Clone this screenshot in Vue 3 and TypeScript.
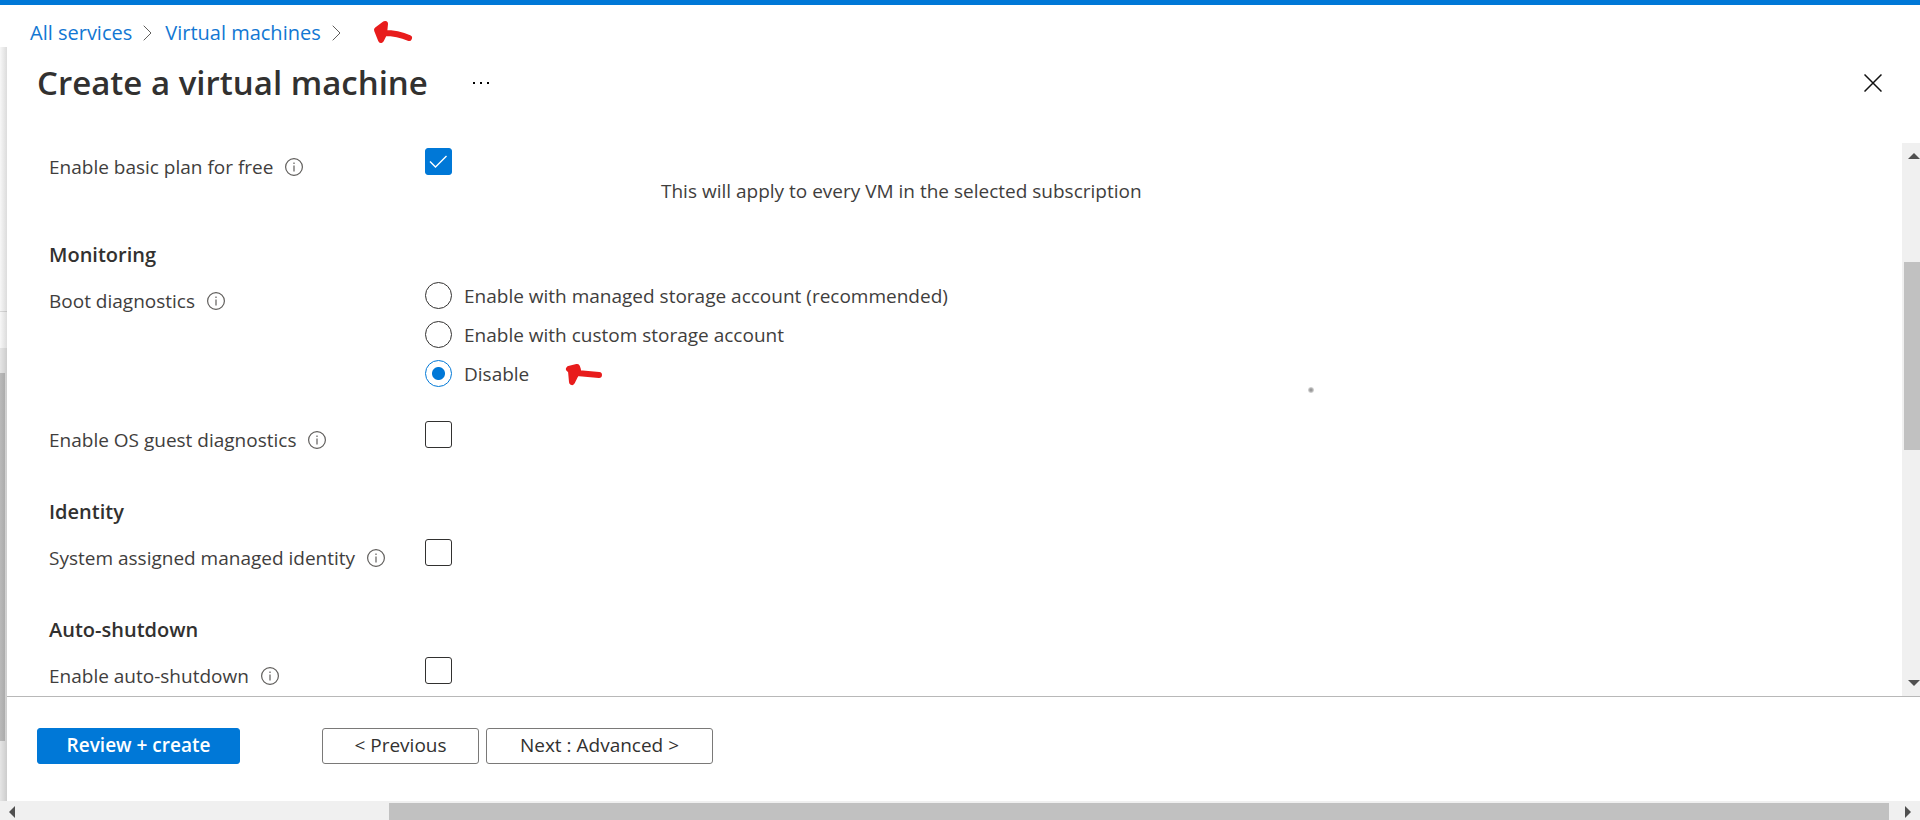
<script setup lang="ts">
import { ref } from 'vue'

interface CheckRow {
  id: string
  label: string
  checked: boolean
  note?: string
}

interface Section {
  id: string
  title?: string
  radios?: boolean
  rows: CheckRow[]
}

const crumbs: string[] = ['All services', 'Virtual machines']

const bootOptions = [
  { value: 'managed', label: 'Enable with managed storage account (recommended)' },
  { value: 'custom', label: 'Enable with custom storage account' },
  { value: 'disable', label: 'Disable' },
]
const boot = ref('disable')

const sections = ref<Section[]>([
  {
    id: 'defender',
    rows: [
      {
        id: 'basic-plan',
        label: 'Enable basic plan for free',
        checked: true,
        note: 'This will apply to every VM in the selected subscription',
      },
    ],
  },
  {
    id: 'monitoring',
    title: 'Monitoring',
    radios: true,
    rows: [{ id: 'guest-diagnostics', label: 'Enable OS guest diagnostics', checked: false }],
  },
  {
    id: 'identity',
    title: 'Identity',
    rows: [{ id: 'managed-identity', label: 'System assigned managed identity', checked: false }],
  },
  {
    id: 'shutdown',
    title: 'Auto-shutdown',
    rows: [{ id: 'auto-shutdown', label: 'Enable auto-shutdown', checked: false }],
  },
])
</script>

<template>
  <div class="page">
    <nav class="crumbs" aria-label="Breadcrumb">
      <template v-for="crumb in crumbs" :key="crumb">
        <a href="#">{{ crumb }}</a>
        <svg class="chevron" viewBox="0 0 9 16" aria-hidden="true"><path d="M.7 .7 8 8 .7 15.3" /></svg>
      </template>
      <svg class="mark" viewBox="0 0 38 22" aria-hidden="true">
        <path d="M11 3 3 9 7 19 10 13Z M5 9 10 12Q24 12 35 17" />
      </svg>
    </nav>

    <div class="stage">
      <div class="gutter" aria-hidden="true">
        <div class="gutter-top"></div>
        <div class="gutter-line"></div>
        <div class="gutter-track"><div class="gutter-thumb"></div></div>
      </div>

      <main class="blade">
        <header class="head">
          <h1>Create a virtual machine</h1>
          <button class="icon-btn more" type="button" aria-label="More actions">
            <svg width="18" height="4" viewBox="0 0 18 4"><path d="M1 1h2v2H1zM8 1h2v2H8zM15 1h2v2h-2z" /></svg>
          </button>
          <button class="icon-btn close" type="button" aria-label="Close">
            <svg width="18" height="18" viewBox="0 0 18 18"><path d="M.5 .5l17 17M17.5 .5l-17 17" /></svg>
          </button>
        </header>

        <div class="middle">
          <form class="form" @submit.prevent>
            <section v-for="section in sections" :key="section.id">
              <h2 v-if="section.title">{{ section.title }}</h2>

              <div v-if="section.radios" class="row boot" role="radiogroup" aria-labelledby="boot-label">
                <div class="label">
                  <span id="boot-label">Boot diagnostics</span>
                  <svg class="info" viewBox="0 0 18 18" aria-hidden="true">
                    <circle cx="9" cy="9" r="8.4" /><path d="M9 7.5v6M9 4.5v1.5" />
                  </svg>
                </div>
                <div class="radios">
                  <div v-for="option in bootOptions" :key="option.value" class="option">
                    <label>
                      <input v-model="boot" type="radio" name="boot" :value="option.value" />
                      <span>{{ option.label }}</span>
                    </label>
                    <svg v-if="option.value === 'disable'" class="mark" viewBox="0 0 38 22" aria-hidden="true">
                      <path d="M4 4 12 2 13 5 7 17 6 6Z M12 8 34 10" />
                    </svg>
                  </div>
                </div>
              </div>

              <div v-for="row in section.rows" :key="row.id" class="row">
                <div class="label">
                  <label :for="row.id">{{ row.label }}</label>
                  <svg class="info" viewBox="0 0 18 18" aria-hidden="true">
                    <circle cx="9" cy="9" r="8.4" /><path d="M9 7.5v6M9 4.5v1.5" />
                  </svg>
                </div>
                <div class="control">
                  <span class="check">
                    <input :id="row.id" v-model="row.checked" type="checkbox" />
                    <svg v-if="row.checked" viewBox="0 0 27 27" aria-hidden="true"><path d="M5 13.5l5.5 5.5L21.5 8" /></svg>
                  </span>
                  <p v-if="row.note">{{ row.note }}</p>
                </div>
              </div>
            </section>
          </form>

          <div class="vbar" aria-hidden="true">
            <svg width="12" height="6" viewBox="0 0 12 6"><path d="M0 6 6 0l6 6z" /></svg>
            <div class="vtrack"><div class="vthumb"></div></div>
            <svg width="12" height="6" viewBox="0 0 12 6"><path d="M0 0h12L6 6z" /></svg>
          </div>
          <span class="speck"></span>
        </div>

        <footer class="foot">
          <button class="btn primary" type="button">Review + create</button>
          <button class="btn" type="button">&lt; Previous</button>
          <button class="btn next" type="button">Next : Advanced &gt;</button>
        </footer>
      </main>
    </div>

    <div class="hbar" aria-hidden="true">
      <svg width="6" height="12" viewBox="0 0 6 12"><path d="M6 0v12L0 6z" /></svg>
      <div class="htrack"><div class="hthumb"></div></div>
      <svg width="6" height="12" viewBox="0 0 6 12"><path d="M0 0v12l6-6z" /></svg>
    </div>
  </div>
</template>

<style>
body {
  margin: 0;
  background: #fff;
}
</style>

<style scoped>
.page {
  box-sizing: border-box;
  height: 100vh;
  display: flex;
  flex-direction: column;
  border-top: 5px solid #0078d7;
  overflow: hidden;
  font-family: "Segoe UI", "Open Sans", "Noto Sans", sans-serif;
  font-size: 19px;
  line-height: 24px;
  color: #3f3e3d;
}
h1, h2, p {
  margin: 0;
}
button, input {
  margin: 0;
  font: inherit;
  color: inherit;
}
.crumbs {
  flex: none;
  height: 42px;
  box-sizing: border-box;
  padding: 16px 30px 0;
  display: flex;
  align-items: flex-start;
  font-size: 20px;
}
.crumbs a {
  color: #1277d3;
  text-decoration: none;
}
.chevron {
  width: 9px;
  height: 16px;
  margin: 4px 13px 0 11px;
  fill: none;
  stroke: #605e5c;
}
.mark {
  width: 38px;
  height: 22px;
  overflow: visible;
}
.mark path {
  fill: #e81c1c;
  stroke: #e81c1c;
  stroke-width: 6;
  stroke-linecap: round;
  stroke-linejoin: round;
}
.crumbs .mark {
  margin-left: 20px;
}
.crumbs .mark path {
  fill: none;
}
.stage {
  flex: 1;
  min-height: 0;
  display: flex;
}
.gutter {
  flex: none;
  width: 7px;
  position: relative;
  display: flex;
  flex-direction: column;
  background: #fafafa;
}
.gutter::after {
  content: "";
  position: absolute;
  inset: 0;
  background: linear-gradient(to right, rgba(0, 0, 0, 0.01), rgba(0, 0, 0, 0.12));
}
.gutter-top {
  height: 35%;
}
.gutter-line {
  height: 36px;
  border-top: 1px solid #dcdcdc;
}
.gutter-track {
  flex: 1;
  padding: 25px 2px 60px 0;
  display: flex;
  background: #e8e8e8;
}
.gutter-thumb {
  flex: 1;
  background: #bcbcbc;
}
.blade {
  flex: 1;
  min-width: 0;
  display: flex;
  flex-direction: column;
  background: #fff;
}
.head {
  flex: none;
  height: 96px;
  box-sizing: border-box;
  padding: 12px 38px 0 30px;
  display: flex;
  align-items: flex-start;
}
h1 {
  font-size: 33px;
  line-height: 48px;
  font-weight: 600;
  color: #323130;
}
.icon-btn {
  height: 48px;
  padding: 0;
  border: 0;
  background: none;
  display: flex;
  align-items: center;
}
.more {
  margin-left: 44px;
}
.close {
  margin-left: auto;
}
.close path {
  fill: none;
  stroke: #111;
  stroke-width: 1.5;
}
.middle {
  flex: 1;
  min-height: 0;
  display: flex;
  position: relative;
}
.form {
  flex: 1;
  min-width: 0;
  overflow: hidden;
  padding: 5px 0 0 42px;
  display: flex;
  flex-direction: column;
  gap: 40px;
}
h2 {
  font-size: 20px;
  line-height: 24px;
  font-weight: 600;
  color: #323130;
  margin-bottom: 15px;
}
.row {
  display: grid;
  grid-template-columns: 376px 1fr;
  min-height: 39px;
}
.boot {
  margin-bottom: 34px;
}
.label {
  display: flex;
  align-items: center;
  gap: 12px;
  height: 24px;
  padding-top: 7px;
}
.info {
  width: 18px;
  height: 18px;
  fill: none;
  stroke: #605e5c;
  stroke-width: 1.2;
}
.radios {
  display: flex;
  flex-direction: column;
  gap: 12px;
}
.option, .option label {
  display: flex;
  align-items: center;
}
.option {
  height: 27px;
  gap: 36px;
}
.option label {
  gap: 12px;
}
.option .mark {
  margin-top: 4px;
}
input {
  appearance: none;
  box-sizing: border-box;
  flex: none;
  width: 27px;
  height: 27px;
  border: 1px solid #323130;
  background: #fff;
}
input[type="radio"] {
  border-radius: 50%;
}
input[type="radio"]:checked {
  border-color: #0078d7;
  background: radial-gradient(circle, #0078d7 6px, #fff 7px);
}
input[type="checkbox"] {
  display: block;
  border-radius: 3px;
}
input[type="checkbox"]:checked {
  border-color: #0078d7;
  background: #0078d7;
}
.control {
  display: flex;
  align-items: flex-start;
  gap: 209px;
}
.control p {
  padding-top: 31px;
}
.check {
  position: relative;
  flex: none;
}
.check svg {
  position: absolute;
  inset: 0;
  pointer-events: none;
  fill: none;
  stroke: #fff;
  stroke-width: 1.4;
}
.speck {
  position: absolute;
  left: 68%;
  top: 244px;
  width: 6px;
  height: 6px;
  border-radius: 50%;
  background: radial-gradient(circle, #999 1px, #ddd 3px);
}
.vbar {
  flex: none;
  width: 18px;
  box-sizing: border-box;
  padding: 10px 0;
  display: flex;
  flex-direction: column;
  align-items: flex-end;
  background: #f0f0f0;
  overflow: hidden;
}
.vbar svg, .hbar svg {
  flex: none;
  fill: #505050;
}
.vtrack {
  flex: 1;
  width: 16px;
  padding: 103px 0 230px;
  display: flex;
}
.vthumb, .hthumb {
  flex: 1;
  background: #c1c1c1;
}
.foot {
  flex: none;
  height: 105px;
  box-sizing: border-box;
  padding: 31px 30px 0;
  border-top: 1px solid #b8b8b8;
  display: flex;
  align-items: flex-start;
}
.btn {
  height: 36px;
  min-width: 157px;
  padding: 0 0 2px;
  border: 1px solid #7a7978;
  border-radius: 3px;
  background: #fff;
  color: #323130;
  font-weight: 500;
  white-space: nowrap;
}
.btn.primary {
  width: 203px;
  margin-right: 82px;
  border-color: #0078d7;
  background: #0078d7;
  color: #fff;
  font-weight: 600;
}
.btn.next {
  width: 227px;
  margin-left: 7px;
}
.hbar {
  flex: none;
  height: 19px;
  box-sizing: border-box;
  padding: 2px 9px 0;
  display: flex;
  align-items: center;
  background: #f0f0f0;
}
.htrack {
  flex: 1;
  height: 17px;
  padding: 0 16px 0 374px;
  display: flex;
}
</style>
